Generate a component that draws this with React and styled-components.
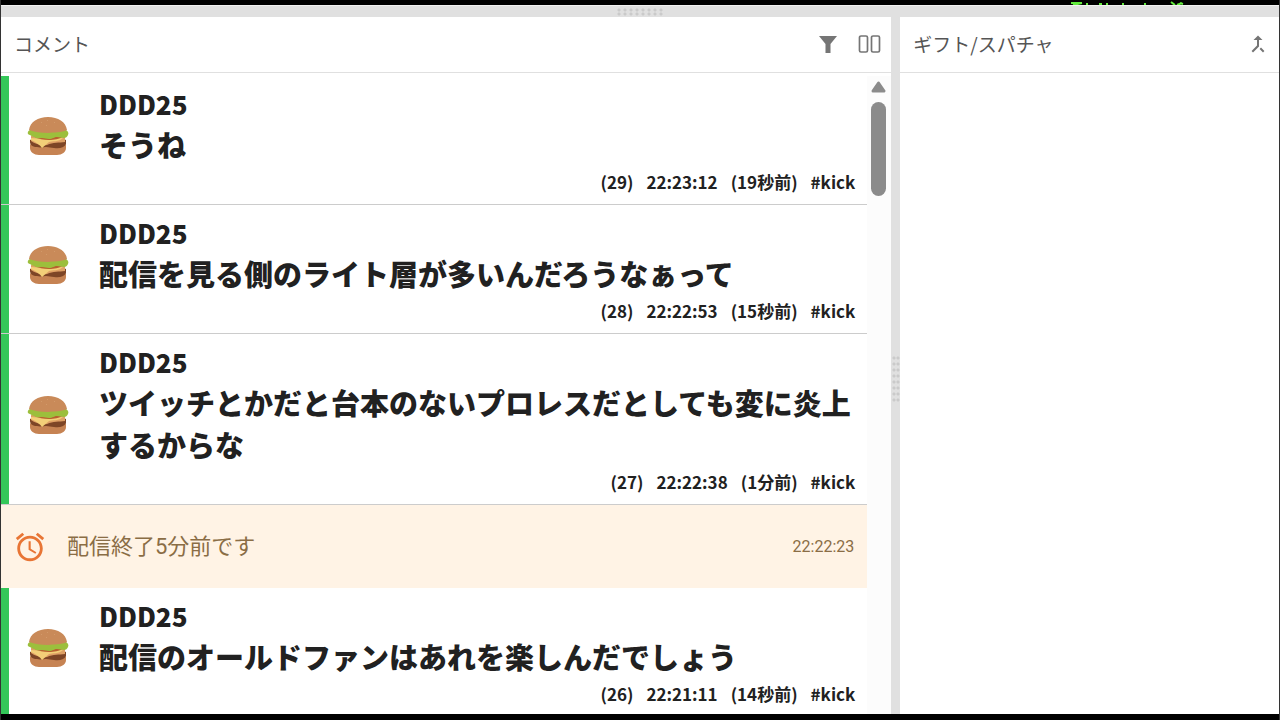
import { memo } from "react";
import styled, { createGlobalStyle } from "styled-components";

const items = [
  { id: 29, name: "DDD25", text: "そうね", time: "22:23:12", ago: "19秒前", tag: "#kick" },
  { id: 28, name: "DDD25", text: "配信を見る側のライト層が多いんだろうなぁって", time: "22:22:53", ago: "15秒前", tag: "#kick" },
  { id: 27, name: "DDD25", text: "ツイッチとかだと台本のないプロレスだとしても変に炎上するからな", time: "22:22:38", ago: "1分前", tag: "#kick" },
  { id: "end", notice: true, text: "配信終了5分前です", time: "22:22:23" },
  { id: 26, name: "DDD25", text: "配信のオールドファンはあれを楽しんだでしょう", time: "22:21:11", ago: "14秒前", tag: "#kick" },
];

const Burger = () => (
  <svg width="42" height="40" viewBox="0 0 42 40" aria-hidden="true">
    <path d="M3 28c3 3 33 3 36 0v4c0 4-4 7-9 7H12c-5 0-9-3-9-7z" fill="#c68353" />
    <path d="M3 24c5-3 31-3 36 0v4c-2 4-7 5-12 4-3 0-5-1-8-1s-6 1-9 0c-4 0-7-2-7-5z" fill="#7d4526" />
    <path d="M4 20h34v6c-6 1-12 0-18 3-5 1-12-1-16-4z" fill="#dfa065" />
    <path d="M4 22c8 1 24 1 32 0-4 4-11 3-14 4l-7 6c-2-3-6-6-11-8z" fill="#f3cf78" />
    <path d="M8 21c6 0 12 1 17 0h10c-5 4-21 4-27 0z" fill="#b8602f" />
    <path d="M3 14h36c2 1 3 3 2 5-1 2-2 3-4 3-3 0-4-1-7-1-3 0-4 2-8 2-3 0-4-1-7-1s-5 1-8-1c-2-1-3-1-4-2-3 0-3-4 0-5z" fill="#9cbf3c" />
    <path d="M2 14C3 6 11 1 21 1s18 5 19 13c-6 3-13 2-19 3-7 0-14-1-19-3z" fill="#c98a59" />
    <path d="M14 6l1 1M20 4l1 1M27 6l1 1M19 9l1 1" stroke="#d29a6a" />
  </svg>
);

const App = memo(() => {
  return (
    <>
      <GlobalStyle />
      <Screen>
        <TopEdge>
          <svg width="116" height="5" viewBox="0 0 116 5" aria-hidden="true">
            <path d="M1 3h11M3 5l9-2M17 3v2M29 4h3M36 4h2M53 3v2M75 3v2M101 2l4 3M107 5l5-2M110 3l3 1" stroke="#62ea3c" strokeWidth="2" fill="none" />
          </svg>
        </TopEdge>
        <Splitter $horizontal>
          <Grip $horizontal />
        </Splitter>
        <Panels>
          <Panel $grow={891}>
            <PanelHeader>
              <h2>コメント</h2>
              <Tools>
                <button aria-label="フィルター">
                  <svg width="20" height="20" viewBox="0 0 20 20">
                    <path d="M1 2h18l-6.500 8v9h-5v-9z" fill="#757575" />
                  </svg>
                </button>
                <button aria-label="列表示">
                  <svg width="24" height="20" viewBox="0 0 24 20" fill="none" stroke="#757575" strokeWidth="1.700">
                    <rect x="1.500" y="2" width="8" height="16" rx="1.500" />
                    <rect x="13.500" y="2" width="8" height="16" rx="1.500" />
                  </svg>
                </button>
              </Tools>
            </PanelHeader>
            <ListArea>
              <CommentList>
                {items.map((item) =>
                  item.notice ? (
                    <Notice key={item.id}>
                      <svg width="34" height="34" viewBox="0 0 24 24" fill="#e87535" aria-hidden="true">
                        <path d="m22 5.720-4.600-3.860-1.290 1.530 4.600 3.860zM7.880 3.390 6.600 1.860 2 5.710l1.290 1.530zM12.500 8H11v6l4.750 2.850.75-1.230-4-2.370zM12 4c-4.970 0-9 4.030-9 9s4.020 9 9 9c4.970 0 9-4.030 9-9s-4.030-9-9-9m0 16c-3.870 0-7-3.130-7-7s3.130-7 7-7 7 3.130 7 7-3.130 7-7 7" />
                      </svg>
                      <p>{item.text}</p>
                      <time>{item.time}</time>
                    </Notice>
                  ) : (
                    <Comment key={item.id}>
                      <Avatar>
                        <Burger />
                      </Avatar>
                      <Body>
                        <Name>{item.name}</Name>
                        <Message>{item.text}</Message>
                        <Meta>
                          <span>({item.id})</span>
                          <time>{item.time}</time>
                          <span>({item.ago})</span>
                          <span>{item.tag}</span>
                        </Meta>
                      </Body>
                    </Comment>
                  )
                )}
              </CommentList>
              <Scrollbar>
                <svg width="15" height="12" viewBox="0 0 15 12" aria-hidden="true">
                  <path d="M7.500 2 13 10H2z" fill="#8b8b8b" stroke="#8b8b8b" strokeWidth="3" strokeLinejoin="round" />
                </svg>
                <Thumb />
              </Scrollbar>
            </ListArea>
          </Panel>
          <Splitter>
            <Grip />
          </Splitter>
          <Panel $grow={379}>
            <PanelHeader>
              <h2>ギフト/スパチャ</h2>
              <Tools>
                <button aria-label="統合">
                  <svg width="24" height="24" viewBox="0 0 24 24" fill="#757575">
                    <path d="M17 20.410 18.410 19 15 15.590 13.590 17zM7.500 8H11v5.590L5.590 19 7 20.410l6-6V8h3.500L12 3.500z" />
                  </svg>
                </button>
              </Tools>
            </PanelHeader>
          </Panel>
        </Panels>
      </Screen>
    </>
  );
});

export default App;

const GlobalStyle = createGlobalStyle`
  * {
    box-sizing: border-box;
    margin: 0;
    padding: 0;
  }
  body {
    background: #000;
    color: #212121;
    font-family: "Noto Sans CJK JP", sans-serif;
  }
`;

const Screen = styled.div`
  height: 100vh;
  display: flex;
  flex-direction: column;
  overflow: hidden;
  background: #000;
  padding-bottom: 6px;
  border-inline: 1px solid #333;
`;

const TopEdge = styled.div`
  height: 5px;
  flex: none;
  display: flex;
  justify-content: flex-end;
  padding-right: 93px;
`;

const Splitter = styled.div`
  flex: none;
  display: flex;
  align-items: center;
  justify-content: center;
  background: #e0e0e0;
  ${({ $horizontal }) =>
    $horizontal
      ? "height: 12px; border-top: 1px solid #f2f2f2;"
      : "width: 9px; padding-top: 26px;"}
`;

const Grip = styled.div`
  width: ${({ $horizontal }) => ($horizontal ? "48px" : "8px")};
  height: ${({ $horizontal }) => ($horizontal ? "8px" : "48px")};
  background-image: radial-gradient(circle, #cacaca 1px, transparent 2px);
  background-size: ${({ $horizontal }) => ($horizontal ? "6px 4px" : "4px 6px")};
`;

const Panels = styled.div`
  flex: 1;
  min-height: 0;
  display: flex;
`;

const Panel = styled.section`
  flex: ${({ $grow }) => $grow} 1 0;
  min-width: 0;
  display: flex;
  flex-direction: column;
  background: #fff;
`;

const PanelHeader = styled.header`
  height: 56px;
  flex: none;
  display: flex;
  align-items: center;
  justify-content: space-between;
  padding: 0 9px 2px 13px;
  border-bottom: 1px solid #e0e0e0;
  h2 {
    font-size: 19px;
    font-weight: 400;
    line-height: 28px;
    color: #555;
  }
`;

const Tools = styled.div`
  display: flex;
  gap: 20px;
  button {
    display: flex;
    border: none;
    background: transparent;
    cursor: pointer;
  }
`;

const ListArea = styled.div`
  flex: 1;
  min-height: 0;
  display: flex;
  padding-top: 3px;
`;

const CommentList = styled.ul`
  flex: 1;
  min-width: 0;
  overflow: hidden;
  list-style: none;
`;

const Comment = styled.li`
  display: flex;
  border-bottom: 1px solid #ccc;
`;

const Avatar = styled.div`
  width: 98px;
  flex: none;
  display: flex;
  align-items: center;
  padding: 0 0 8px 18px;
  border-left: 8px solid #34c759;
`;

const Body = styled.div`
  flex: 1;
  min-width: 0;
  padding: 9px 12px 8px 0;
  font-weight: 900;
`;

const Name = styled.p`
  font-size: 26px;
  line-height: 38px;
`;

const Message = styled.p`
  font-size: 29px;
  line-height: 42px;
`;

const Meta = styled.div`
  display: flex;
  justify-content: flex-end;
  gap: 13px;
  padding-top: 2px;
  font-size: 17px;
  font-weight: 700;
  line-height: 29px;
`;

const Notice = styled.li`
  display: flex;
  align-items: center;
  height: 83px;
  padding: 0 13px 0 12px;
  background: #fff3e5;
  color: #8a6d45;
  font-family: Roboto, "Noto Sans CJK JP", sans-serif;
  p {
    flex: 1;
    padding-left: 20px;
    font-size: 22px;
    line-height: 32px;
  }
  time {
    font-size: 16px;
  }
`;

const Scrollbar = styled.div`
  width: 24px;
  flex: none;
  display: flex;
  flex-direction: column;
  align-items: flex-start;
  gap: 9px;
  padding: 5px 0 0 4px;
  background: #fcfcfc;
`;

const Thumb = styled.div`
  width: 15px;
  height: 94px;
  border-radius: 8px;
  background: #8b8b8b;
`;
